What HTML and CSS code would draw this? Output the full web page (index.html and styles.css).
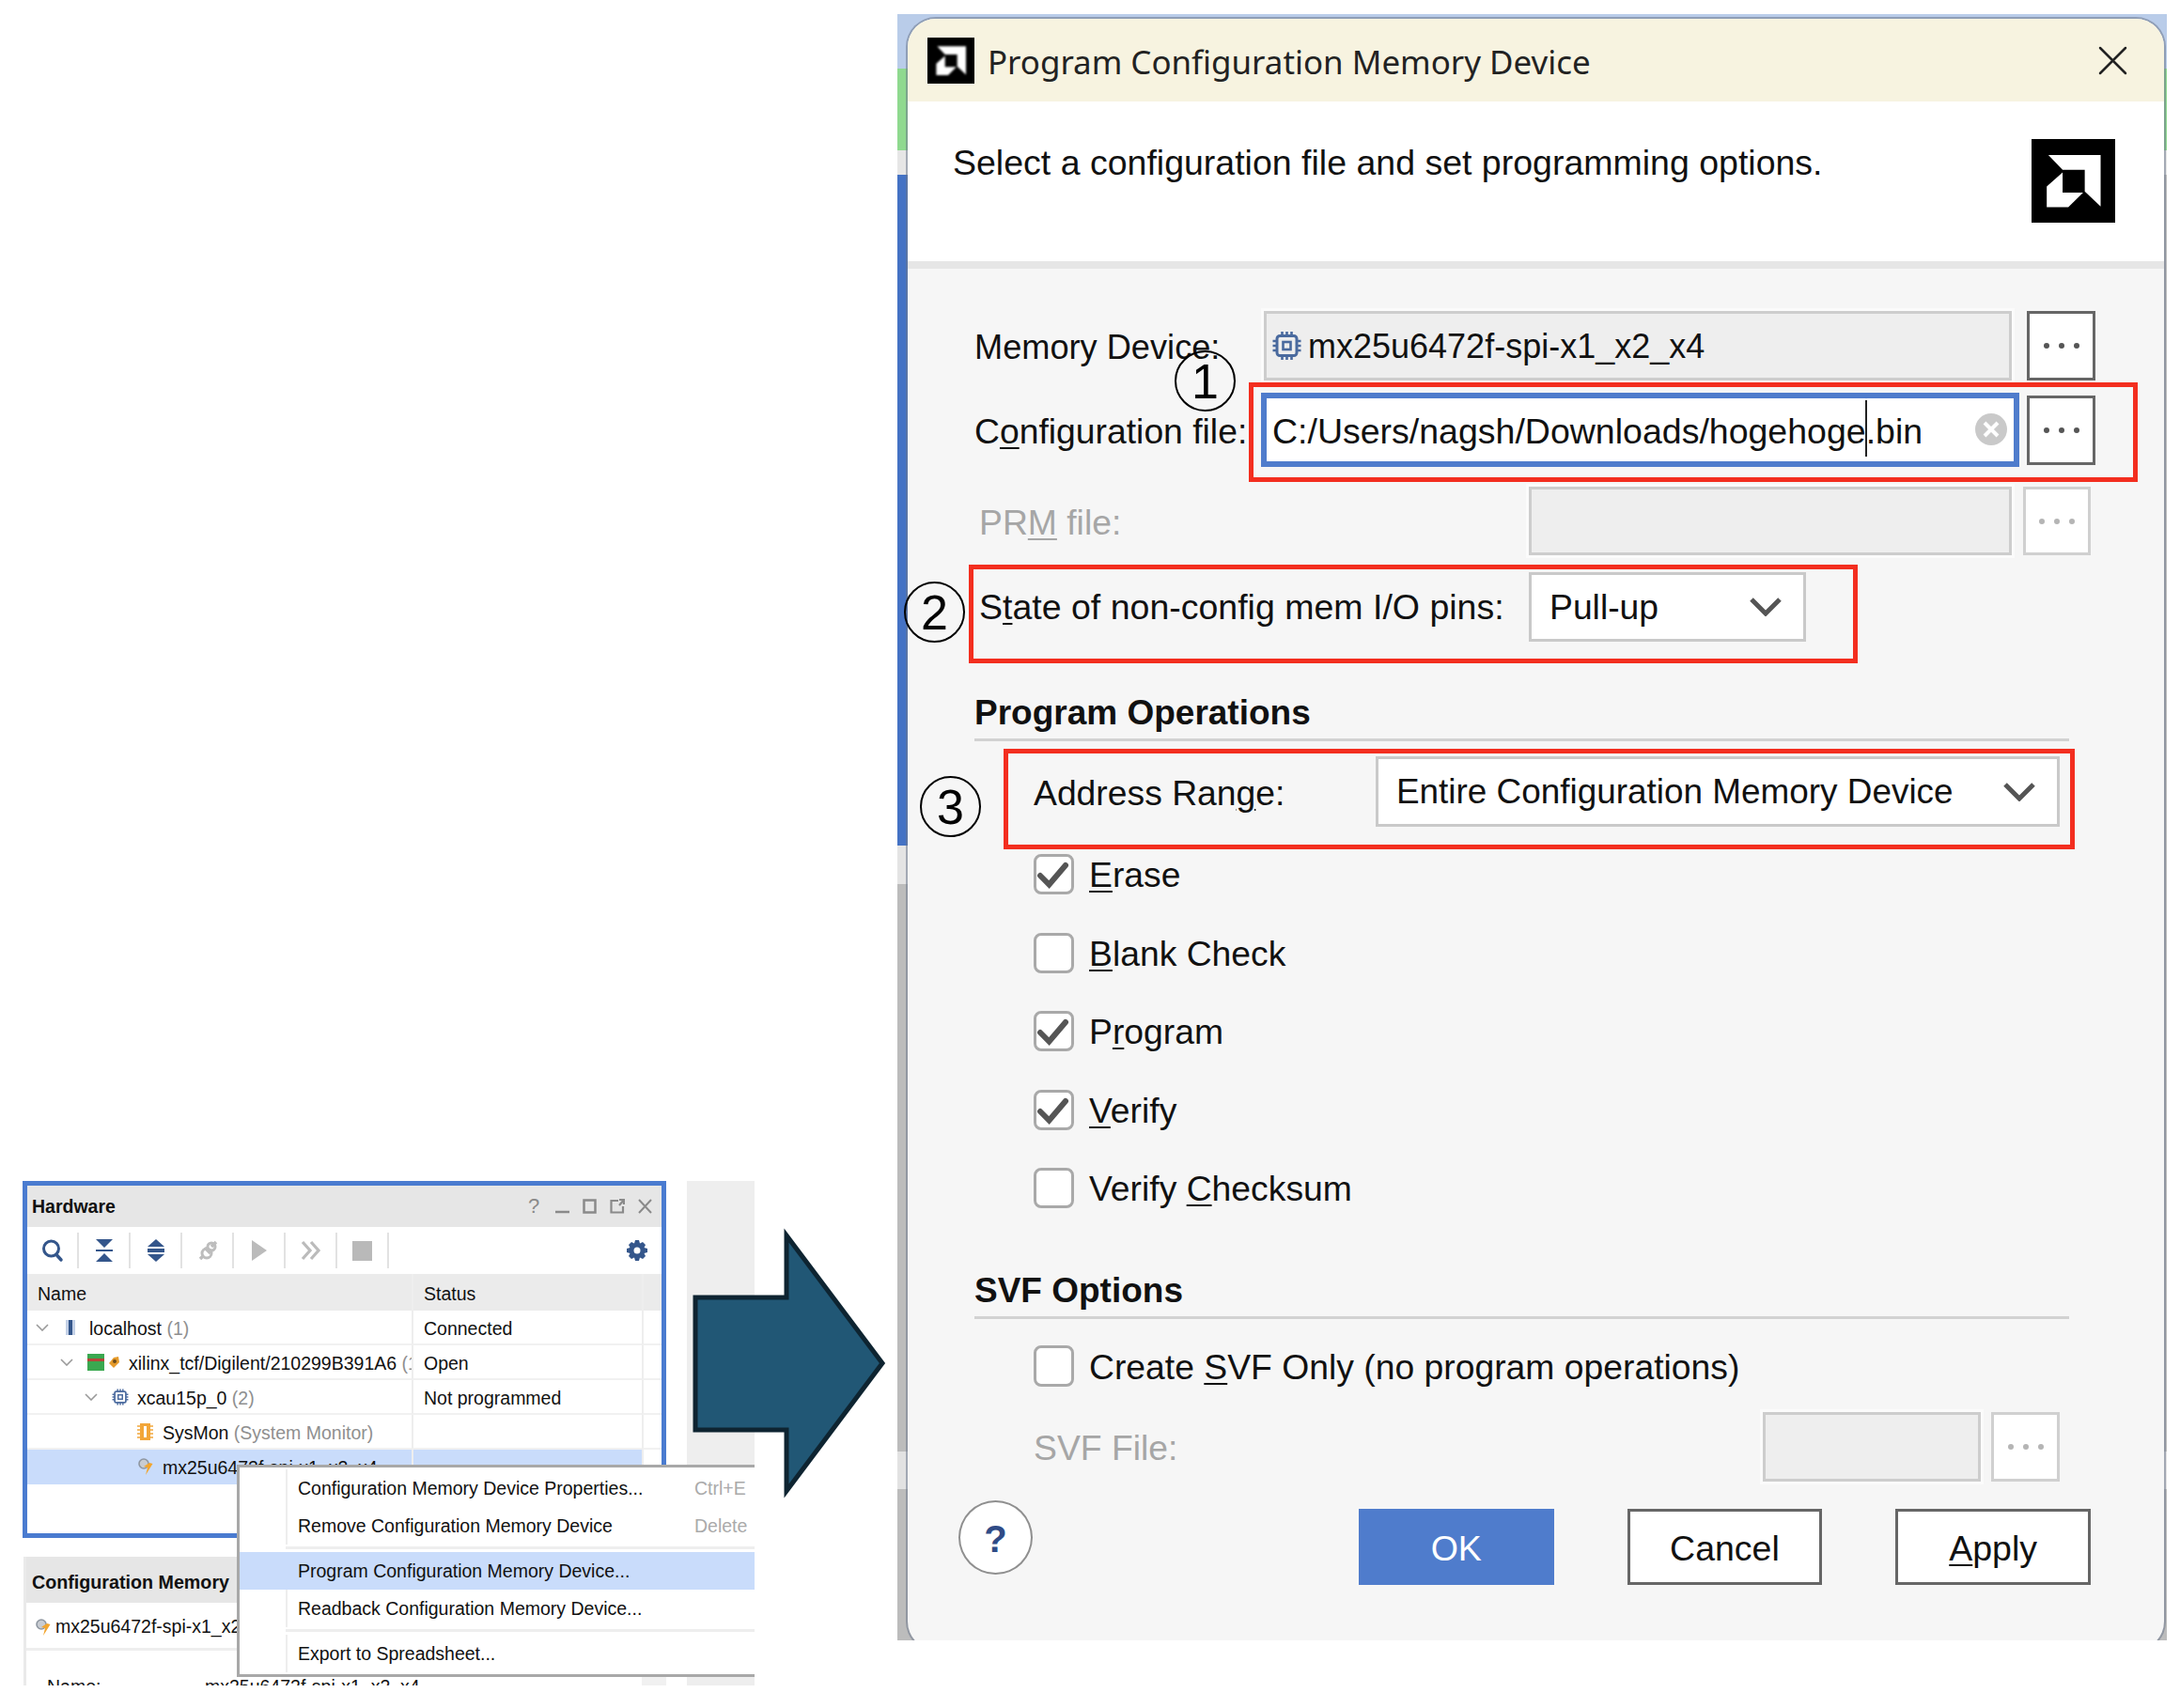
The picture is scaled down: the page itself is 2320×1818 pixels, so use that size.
FILE: index.html
```html
<!DOCTYPE html>
<html lang="en">
<head>
<meta charset="utf-8">
<title>Program Configuration Memory Device</title>
<link rel="stylesheet" href="styles.css">
</head>
<body>
<svg class="sprite" aria-hidden="true">
  <symbol id="amd" viewBox="0 0 88 88"><path fill="#fff" d="M17.7 16.7H72.7V71L56 55V32.3H32.7Z"/><path fill="#fff" d="M32.7 35L16 50V71.7H38.7L54.3 56.3H32.7Z"/></symbol>
  <symbol id="chip" viewBox="0 0 32 32"><g fill="none" stroke="#4a6a9e"><rect x="5.5" y="5.5" width="21" height="21" rx="3" stroke-width="3"/><rect x="12" y="12" width="8" height="8" stroke-width="2.6"/><path stroke-width="2.6" d="M11 1V5M16 1V5M21 1V5M11 27V31M16 27V31M21 27V31M1 11H5M1 16H5M1 21H5M27 11H31M27 16H31M27 21H31"/></g></symbol>
  <symbol id="dots" viewBox="0 0 44 8"><circle cx="6" cy="4" r="3"/><circle cx="22" cy="4" r="3"/><circle cx="38" cy="4" r="3"/></symbol>
  <symbol id="chev" viewBox="0 0 34 20"><path fill="none" stroke="#555" stroke-width="5" d="M2 2L17 17L32 2"/></symbol>
  <symbol id="check" viewBox="0 0 43 44"><path fill="none" stroke="#555" stroke-width="6" stroke-linecap="round" d="M7 23L16.500 32.500L34 12"/></symbol>
  <symbol id="twist" viewBox="0 0 14 8"><path fill="none" stroke="#9a9a9a" stroke-width="1.6" d="M1 1L7 7L13 1"/></symbol>
  <symbol id="flash" viewBox="0 0 17 18"><circle cx="7" cy="6" r="5" fill="#c8ccd2" stroke="#8e96a0" stroke-width="1.6"/><path fill="#f2a52e" d="M13 5L16.500 6L9 18L11 10L7 9Z"/></symbol>
</svg>

<main class="desk">
  <section class="hw">
    <header class="pane-title">
      <span class="pane-name">Hardware</span>
      <span class="pane-tools">
        <span class="pane-help">?</span>
        <svg width="15" height="16" viewBox="0 0 15 16"><path fill="none" stroke="#8a8a8a" stroke-width="2.500" d="M0 14H15"/></svg>
        <svg width="15" height="16" viewBox="0 0 15 16"><rect x="1.500" y="1.500" width="12" height="13" fill="none" stroke="#8a8a8a" stroke-width="2.500"/></svg>
        <svg width="16" height="16" viewBox="0 0 16 16"><path fill="none" stroke="#8a8a8a" stroke-width="2.200" d="M9 2H1.500V14.500H14V8M10 7L15 1M10 1H15V6"/></svg>
        <svg width="15" height="16" viewBox="0 0 15 16"><path fill="none" stroke="#8a8a8a" stroke-width="2" d="M1 1L14 15M14 1L1 15"/></svg>
      </span>
    </header>
    <div class="toolbar">
      <span class="tool"><svg width="24" height="26" viewBox="0 0 24 26"><circle cx="10.500" cy="11" r="8" fill="none" stroke="#34568b" stroke-width="3"/><path stroke="#34568b" stroke-width="3.500" stroke-linecap="round" d="M16.500 18L21 23"/></svg></span>
      <span class="tool"><svg width="20" height="26" viewBox="0 0 20 26"><path fill="#34568b" d="M1 1H19L10 10ZM1 25H19L10 16ZM1 12H19V14H1Z"/></svg></span>
      <span class="tool"><svg width="20" height="26" viewBox="0 0 20 26"><path fill="#34568b" d="M10 1L19 9H1ZM10 25L19 17H1ZM1 11H19V15H1Z"/></svg></span>
      <span class="tool"><svg width="22" height="24" viewBox="0 0 22 24"><path fill="none" stroke="#bdbdbd" stroke-width="3.500" d="M8 9L14 15M3 21L7 17M15 8L20 3"/><circle cx="10" cy="15" r="5" fill="none" stroke="#bdbdbd" stroke-width="3"/><circle cx="15" cy="8" r="4" fill="none" stroke="#bdbdbd" stroke-width="3"/></svg></span>
      <span class="tool"><svg width="18" height="24" viewBox="0 0 18 24"><path fill="#bbb" d="M1 1L17 12L1 23Z"/></svg></span>
      <span class="tool"><svg width="22" height="22" viewBox="0 0 22 22"><path fill="none" stroke="#bbb" stroke-width="3.200" d="M2 2L10 11L2 20M11 2L19 11L11 20"/></svg></span>
      <span class="tool"><span class="stop"></span></span>
      <span class="gear"><svg width="22" height="24" viewBox="0 0 22 24"><path fill="#34568b" d="M9 1H13L14 4.500L17 3L20 6L18.500 9L22 10V14L18.500 15L20 18L17 21L14 19.500L13 23H9L8 19.500L5 21L2 18L3.500 15L0 14V10L3.500 9L2 6L5 3L8 4.500Z"/><circle cx="11" cy="12" r="3.500" fill="#fff"/></svg></span>
    </div>
    <div class="tree">
      <div class="tree-row tree-head">
        <div class="cell-name head-name">Name</div>
        <div class="cell-status">Status</div>
        <div class="cell-rest"></div>
      </div>
      <div class="tree-row">
        <div class="cell-name lvl0">
          <svg class="twist" width="14" height="8"><use href="#twist"/></svg>
          <span class="host-icon"></span>
          <span class="node">localhost <span class="dim">(1)</span></span>
        </div>
        <div class="cell-status">Connected</div>
        <div class="cell-rest"></div>
      </div>
      <div class="tree-row">
        <div class="cell-name lvl1">
          <svg class="twist" width="14" height="8"><use href="#twist"/></svg>
          <span class="board-icon"></span>
          <svg class="tag-icon" width="14" height="14" viewBox="0 0 14 14"><path fill="#e59a2a" d="M7 2L12 1L13 7L7 13L2 8Z"/><circle cx="8" cy="6" r="2" fill="#6b4a1a"/></svg>
          <span class="node">xilinx_tcf/Digilent/210299B391A6 <span class="dim">(1)</span></span>
        </div>
        <div class="cell-status">Open</div>
        <div class="cell-rest"></div>
      </div>
      <div class="tree-row">
        <div class="cell-name lvl2">
          <svg class="twist" width="14" height="8"><use href="#twist"/></svg>
          <svg class="chip-small" width="18" height="18"><use href="#chip"/></svg>
          <span class="node">xcau15p_0 <span class="dim">(2)</span></span>
        </div>
        <div class="cell-status">Not programmed</div>
        <div class="cell-rest"></div>
      </div>
      <div class="tree-row">
        <div class="cell-name lvl3">
          <svg width="17" height="18" viewBox="0 0 17 18"><path fill="#f2a63a" d="M3 0H14V18H3Z"/><path stroke="#f2a63a" stroke-width="1.500" d="M0 3H17M0 7H17M0 11H17M0 15H17"/><path fill="#fff" d="M7 3H10V15H7Z"/></svg>
          <span class="node">SysMon <span class="dim">(System Monitor)</span></span>
        </div>
        <div class="cell-status"></div>
        <div class="cell-rest"></div>
      </div>
      <div class="tree-row is-selected">
        <div class="cell-name lvl3">
          <svg width="17" height="18"><use href="#flash"/></svg>
          <span class="node">mx25u6472f-spi-x1_x2_x4</span>
        </div>
        <div class="cell-status"></div>
        <div class="cell-rest"></div>
      </div>
    </div>
  </section>

  <section class="cfgmem">
    <header class="cfgmem-title">Configuration Memory</header>
    <div class="cfgmem-item">
      <svg width="17" height="18"><use href="#flash"/></svg>
      <span>mx25u6472f-spi-x1_x2_x4</span>
    </div>
    <div class="cfgmem-prop"><span class="prop-key">Name:</span><span>mx25u6472f-spi-x1_x2_x4</span></div>
    <span class="cfgmem-scroll"></span>
  </section>

  <div class="sidebar"></div>

  <nav class="menu">
    <div class="menu-item"><span class="menu-text">Configuration Memory Device Properties...</span><span class="menu-key">Ctrl+E</span></div>
    <div class="menu-item"><span class="menu-text">Remove Configuration Memory Device</span><span class="menu-key">Delete</span></div>
    <div class="menu-sep"></div>
    <div class="menu-item is-active"><span class="menu-text">Program Configuration Memory Device...</span></div>
    <div class="menu-item"><span class="menu-text">Readback Configuration Memory Device...</span></div>
    <div class="menu-sep"></div>
    <div class="menu-item"><span class="menu-text">Export to Spreadsheet...</span></div>
  </nav>

  <svg class="arrow" width="208" height="294" viewBox="0 0 208 294"><path fill="#215775" stroke="#0e2431" stroke-width="5" d="M3 77H100V11L202 147L100 283V218H3Z"/></svg>

  <div class="backdrop">
    <section class="dialog">
      <header class="titlebar">
        <span class="title-logo"><svg width="50" height="49"><use href="#amd"/></svg></span>
        <h1 class="title-text">Program Configuration Memory Device</h1>
        <svg class="title-close" width="31" height="31" viewBox="0 0 31 31"><path fill="none" stroke="#222" stroke-width="2.500" stroke-linecap="round" d="M2 2L29 29M29 2L2 29"/></svg>
      </header>
      <div class="banner">
        <p class="banner-text">Select a configuration file and set programming options.</p>
        <svg class="banner-logo" width="89" height="89"><use href="#amd"/></svg>
      </div>
      <div class="form">
        <div class="row row-mem">
          <label class="label label-mem w-mem">Memory Device:</label>
          <div class="field field-ro w-mem-field">
            <svg class="field-chip" width="33" height="32"><use href="#chip"/></svg>
            <span class="device-name">mx25u6472f-spi-x1_x2_x4</span>
          </div>
          <button class="more more-mem"><svg width="44" height="8"><use href="#dots"/></svg></button>
        </div>
        <div class="row row-cfg">
          <label class="label w-cfg">C<u>o</u>nfiguration file:</label>
          <div class="field field-focus">
            <span class="typed">C:/Users/nagsh/Downloads/hogehoge<span class="caret"></span>.bin</span>
            <svg class="clear" width="34" height="34" viewBox="0 0 34 34"><circle cx="17" cy="17" r="17" fill="#c9c9c9"/><path stroke="#fff" stroke-width="4" d="M10 10L24 24M24 10L10 24"/></svg>
          </div>
          <button class="more more-cfg"><svg width="44" height="8"><use href="#dots"/></svg></button>
        </div>
        <div class="row row-prm">
          <label class="label label-off w-prm">PR<u>M</u> file:</label>
          <div class="field field-ro w-prm-field"></div>
          <button class="more more-off more-prm"><svg width="44" height="8"><use href="#dots"/></svg></button>
        </div>
        <div class="row row-state">
          <label class="label label-state w-prm">S<u>t</u>ate of non-config mem I/O pins:</label>
          <div class="select w-state">
            <span>Pull-up</span>
            <svg width="34" height="20"><use href="#chev"/></svg>
          </div>
        </div>
        <h2 class="section section-ops">Program Operations</h2>
        <div class="row row-addr">
          <label class="label w-addr">Address Ran<u>g</u>e:</label>
          <div class="select w-addr-field">
            <span class="select-long">Entire Configuration Memory Device</span>
            <svg width="34" height="20"><use href="#chev"/></svg>
          </div>
        </div>
        <div class="checks">
          <div class="check-row"><span class="box"><svg width="43" height="44"><use href="#check"/></svg></span><span class="check-text"><u>E</u>rase</span></div>
          <div class="check-row"><span class="box"></span><span class="check-text"><u>B</u>lank Check</span></div>
          <div class="check-row"><span class="box"><svg width="43" height="44"><use href="#check"/></svg></span><span class="check-text">P<u>r</u>ogram</span></div>
          <div class="check-row"><span class="box"><svg width="43" height="44"><use href="#check"/></svg></span><span class="check-text"><u>V</u>erify</span></div>
          <div class="check-row"><span class="box"></span><span class="check-text">Verify <u>C</u>hecksum</span></div>
        </div>
        <h2 class="section section-svf">SVF Options</h2>
        <div class="check-row check-create"><span class="box"></span><span class="check-text">Create <u>S</u>VF Only (no program operations)</span></div>
        <div class="row row-svf">
          <label class="label label-off w-svf">SVF File:</label>
          <div class="field field-ro w-svf-field"></div>
          <button class="more more-off more-svf"><svg width="44" height="8"><use href="#dots"/></svg></button>
        </div>
        <footer class="footer">
          <button class="help">?</button>
          <button class="btn btn-ok">OK</button>
          <button class="btn">Cancel</button>
          <button class="btn"><u>A</u>pply</button>
        </footer>
      </div>
    </section>
  </div>

  <div class="note note-box note-a"></div>
  <div class="note note-box note-b"></div>
  <div class="note note-box note-c"></div>
  <div class="note note-num num-1">1</div>
  <div class="note note-num num-2">2</div>
  <div class="note note-num num-3">3</div>
</main>
</body>
</html>
```

FILE: styles.css
```css
* { box-sizing: border-box; }
html, body { margin: 0; padding: 0; background: #fff; }
body { font-family: "Liberation Sans", Arial, sans-serif; color: #111; }
.sprite { display: none; }
u { text-decoration-thickness: 2px; text-underline-offset: 4px; }
svg { display: block; flex: none; }

.desk { position: relative; width: 2320px; height: 1818px; overflow: hidden; background: #fff; }

/* ---------- Hardware pane ---------- */
.hw {
  position: absolute; left: 24px; top: 1257px; width: 685px; height: 380px;
  border: 5px solid #4a7bd0; background: #fff; font-size: 19.500px; overflow: hidden;
}
.pane-title { height: 44px; background: #e6e6e6; display: flex; align-items: center; justify-content: space-between; padding: 0 10px 0 5px; }
.pane-name { font-weight: bold; font-size: 19.500px; }
.pane-tools { display: flex; align-items: center; gap: 14px; }
.pane-help { color: #8a8a8a; font-size: 22px; width: 15px; margin-right: 0; }
.toolbar { height: 50px; display: flex; align-items: center; background: #fff; }
.tool { width: 55px; height: 38px; display: flex; align-items: center; justify-content: center; border-right: 2px solid #e2e2e2; }
.stop { width: 21px; height: 21px; background: #b9b9b9; display: block; }
.gear { margin-left: auto; margin-right: 15px; }
.tree-row { display: grid; grid-template-columns: 409px 245px 1fr; height: 37px; }
.tree-row > div { border-bottom: 2px solid #f1f1f1; display: flex; align-items: center; white-space: nowrap; overflow: hidden; }
.tree-head { height: 39px; background: #ebebeb; }
.tree-head > div { border-bottom: none; }
.node, .cell-status, .head-name { padding-top: 3px; }
.head-name { padding-left: 11px; }
.cell-status { border-left: 2px solid #eee; padding-left: 11px; }
.cell-rest { border-left: 2px solid #eee; }
.is-selected .cell-name, .is-selected .cell-status { background: #c9dcfb; border-bottom-color: #c9dcfb; }
.dim { color: #8f8f8f; }
.lvl0 { padding-left: 9px; }
.lvl1 { padding-left: 35px; }
.lvl2 { padding-left: 61px; }
.lvl3 { padding-left: 117px; }
.host-icon { flex: none; width: 10px; height: 16px; margin-left: 18px; background: #c3d0e6; border-left: 3px solid #c3d0e6; border-right: 3px solid #c3d0e6; position: relative; }
.host-icon::after { content: ""; display: block; width: 4px; height: 16px; background: #34568b; }
.lvl0 .node { margin-left: 15px; }
.board-icon { flex: none; width: 18px; height: 18px; margin-left: 15px; background: linear-gradient(#3aa850 0 5px, #b5453a 5px 8px, #3aa850 8px); }
.tag-icon { margin-left: 3px; }
.lvl1 .node { margin-left: 9px; }
.chip-small { margin-left: 15px; }
.lvl2 .node { margin-left: 9px; }
.lvl3 .node { margin-left: 10px; }

/* ---------- Configuration Memory pane ---------- */
.cfgmem { position: absolute; left: 25px; top: 1657px; width: 684px; height: 137px; overflow: hidden; background: #fff; border-left: 3px solid #eaeaea; font-size: 19.500px; }
.cfgmem-title { height: 49px; background: #e6e6e6; display: flex; align-items: center; padding: 6px 0 0 6px; font-weight: bold; font-size: 19.700px; }
.cfgmem-item { height: 51px; display: flex; align-items: center; gap: 0; padding: 3px 0 0 9px; border-bottom: 3px solid #eee; }
.cfgmem-item span { margin-left: 5px; }
.cfgmem-prop { display: flex; padding: 27px 0 0 22px; white-space: nowrap; }
.prop-key { width: 168px; }
.cfgmem-scroll { position: absolute; right: 0; top: 127px; width: 26px; height: 10px; background: #f1f1f1; }

.sidebar { position: absolute; left: 731px; top: 1257px; width: 72px; height: 537px; background: #eeeeee; }

/* ---------- Context menu ---------- */
.menu {
  position: absolute; left: 252px; top: 1559px; width: 551px; height: 226px;
  background: #fff; border-top: 3px solid #a8a8a8; border-left: 3px solid #a8a8a8; border-bottom: 3px solid #a8a8a8;
  font-size: 19.500px; overflow: hidden; padding-top: 2px;
}
.menu-item { height: 40px; margin-left: 49px; padding-left: 11px; border-left: 2px solid #eee; display: flex; align-items: center; white-space: nowrap; }
.menu-text { width: 422px; }
.menu-key { color: #aaa; }
.menu-sep { height: 8px; margin-left: 49px; background: linear-gradient(#fff 0 2px, #eee 2px 5px, #fff 5px); }
.menu-item.is-active { margin-left: 0; padding-left: 62px; border-left: none; background: #c9dcfb; }

.arrow { position: absolute; left: 737px; top: 1304px; }

/* ---------- Dialog ---------- */
.backdrop {
  position: absolute; left: 955px; top: 15px; width: 1351px; height: 1731px; overflow: hidden; padding: 5px 0 0 11px;
  background:
    linear-gradient(#b9cce9 0 58px, #8fd98f 58px 145px, #e6e6e6 145px 171px, #bcbcbc 171px 1530px, #e2e2e2 1530px 1570px, #bcbcbc 1570px) right top / 675px 100% no-repeat,
    linear-gradient(#b9cce9 0 58px, #8fd98f 58px 145px, #e6e6e6 145px 171px, #4472c4 171px 885px, #e4e4e4 885px 926px, #bcbcbc 926px 1530px, #e2e2e2 1530px 1570px, #bcbcbc 1570px) left top / 676px 100% no-repeat;
}
.dialog { width: 1337px; height: 1736px; border-radius: 30px; background: #f6f6f6; overflow: hidden; box-shadow: 0 0 0 2px rgba(110,120,140,.55); }
.titlebar { height: 88px; background: #f7f3e0; display: flex; align-items: center; padding: 0 39px 0 21px; }
.title-logo { width: 50px; height: 49px; background: #000; overflow: hidden; display: block; }
.title-logo svg { filter: blur(1px); }
.title-text { margin: 2px 0 0 14px; flex: 1; font: 400 34.900px "Noto Sans", sans-serif; color: #222; }
.banner { height: 178px; background: #fff; border-bottom: 8px solid #e6e6e6; display: flex; justify-content: space-between; align-items: flex-start; padding: 43px 52px 0 48px; }
.banner-text { margin: 0; font-size: 37.500px; line-height: 44px; }
.banner-logo { margin-top: -3px; background: #000; }

.form { padding-top: 45px; font-size: 37.300px; }
.row { display: flex; align-items: center; padding-left: 71px; }
.label { display: block; white-space: nowrap; padding-top: 3px; }
.label-off { color: #a6a6a6; }
.label-state { font-size: 37.500px; padding-top: 0; }
.label-mem { font-size: 36.200px; }
.row-mem { height: 74px; }
.row-cfg { height: 79px; margin-top: 13px; }
.row-prm { height: 73px; margin-top: 21px; padding-left: 76px; }
.row-state { height: 74px; margin-top: 18px; padding-left: 76px; }
.row-addr { height: 75px; margin-top: 16px; padding-left: 134px; }
.row-svf { height: 74px; margin-top: 27px; padding-left: 134px; }
.w-mem { width: 308px; }
.w-cfg { width: 305px; }
.w-prm { width: 585px; }
.w-addr { width: 364px; }
.w-svf { width: 776px; }

.field { height: 100%; display: flex; align-items: center; background: #fff; }
.field-ro { background: #eeeeee; border: 3px solid #cdcdcd; box-shadow: 0 0 0 3px #fbfbfb; }
.w-mem-field { width: 796px; padding-left: 5px; }
.field-chip { margin-right: 6px; }
.device-name { font-size: 36px; padding-top: 2px; }
.w-prm-field { width: 514px; }
.w-svf-field { width: 232px; }
.field-focus { width: 807px; border: 6px solid #4f7ccc; padding: 0 0 3px 6px; position: relative; }
.typed { position: relative; white-space: nowrap; font-size: 37.500px; }
.caret { display: inline-block; width: 2px; height: 60px; margin: 0 -1px; background: #222; vertical-align: -14px; }
.clear { position: absolute; right: 7px; top: 16px; }

.more { height: 74px; width: 73px; padding: 0; background: #fff; border: 3px solid #666; display: flex; align-items: center; justify-content: center; }
.more svg { fill: #555; }
.more-mem { margin-left: 16px; }
.more-cfg { margin-left: 8px; }
.more-off { border-color: #d0d0d0; }
.more-off svg { fill: #b5b5b5; }
.more-prm { margin-left: 12px; width: 72px; height: 73px; }
.more-svf { margin-left: 11px; }

.select { height: 100%; background: #fff; border: 3px solid #c9c9c9; display: flex; align-items: center; justify-content: space-between; padding: 0 23px 0 19px; white-space: nowrap; }
.w-state { width: 295px; }
.w-addr-field { width: 728px; }
.select-long { font-size: 36.900px; padding-top: 1px; }

.section { margin: 0 0 0 71px; width: 1165px; height: 54px; border-bottom: 3px solid #d2d2d2; font-size: 37px; font-weight: bold; line-height: 48px; }
.section-ops { margin-top: 52px; }
.section-svf { margin-top: 64px; }

.checks { margin-top: 29px; display: flex; flex-direction: column; gap: 40.500px; }
.check-row { height: 43px; display: flex; align-items: center; padding-left: 134px; white-space: nowrap; }
.check-text { padding-top: 2px; }
.box { width: 43px; height: 100%; margin-right: 16px; background: #fff; border: 3px solid #a9a9a9; border-radius: 8px; flex: none; position: relative; overflow: hidden; }
.box svg { position: absolute; left: -3px; top: -3px; }
.check-create { height: 44px; margin-top: 28px; }

.footer { display: flex; align-items: flex-start; margin-top: 20px; padding-left: 54px; }
.help { width: 79px; height: 79px; border-radius: 50%; background: #fff; border: 2px solid #8f8f8f; color: #2f4b86; font: bold 40px "Liberation Sans", sans-serif; padding: 3px 0 0; margin-right: 347px; }
.btn { width: 208px; height: 81px; margin-top: 9px; margin-right: 78px; background: #fff; border: 3px solid #666; font: 37.500px "Liberation Sans", sans-serif; color: #111; padding: 3px 0 0; }
.btn-ok { background: #4f7ccc; border-color: #4f7ccc; color: #fff; }

/* ---------- Annotations over the figure ---------- */
.note { position: absolute; }
.note-box { border: 5px solid #f32e1f; }
.note-a { left: 1329px; top: 407px; width: 946px; height: 106px; }
.note-b { left: 1031px; top: 601px; width: 946px; height: 105px; }
.note-c { left: 1068px; top: 797px; width: 1140px; height: 107px; }
.note-num { width: 65px; height: 65px; border: 2.500px solid #000; border-radius: 50%; display: flex; align-items: center; justify-content: center; font-size: 52px; color: #000; line-height: 1; }
.num-1 { left: 1250px; top: 373px; }
.num-2 { left: 962px; top: 619px; }
.num-3 { left: 979px; top: 826px; }
```
